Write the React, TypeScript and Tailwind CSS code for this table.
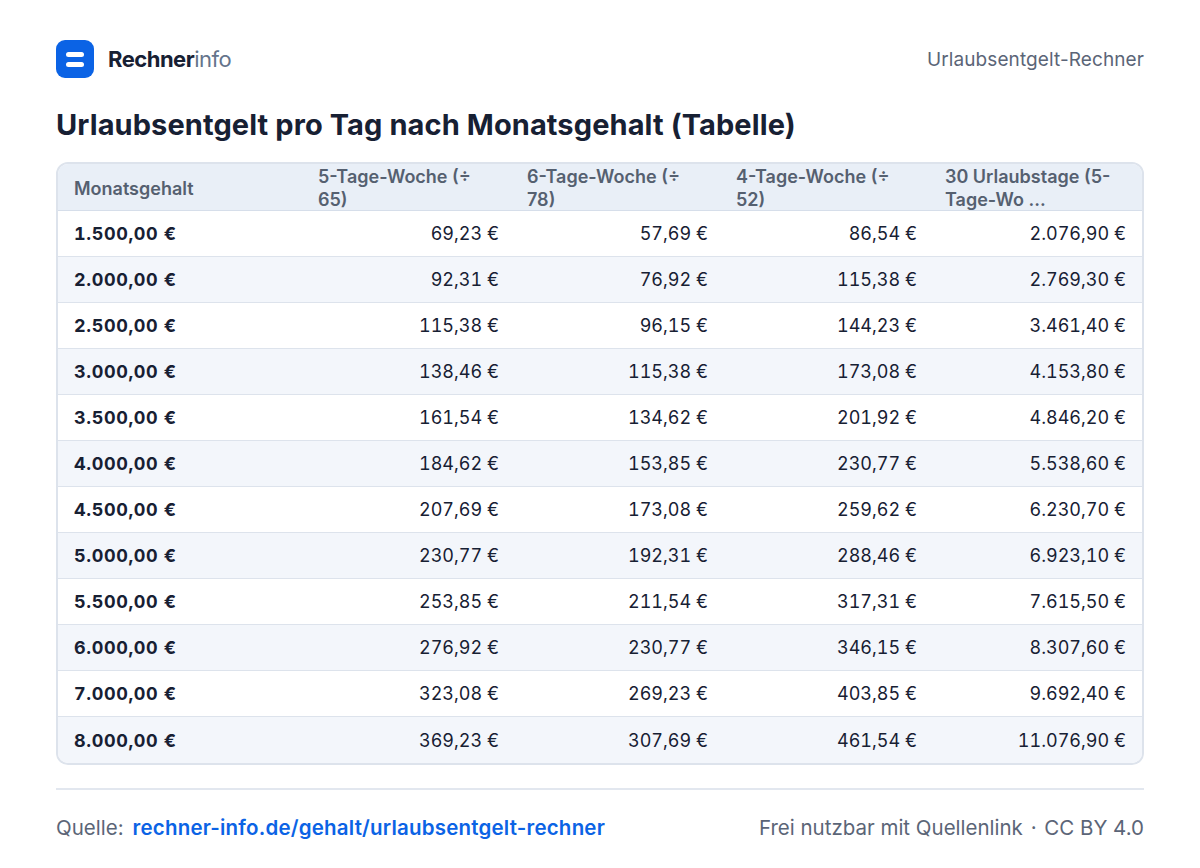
import React from 'react';

const rows: string[][] = [
  ['1.500,00 €', '69,23 €', '57,69 €', '86,54 €', '2.076,90 €'],
  ['2.000,00 €', '92,31 €', '76,92 €', '115,38 €', '2.769,30 €'],
  ['2.500,00 €', '115,38 €', '96,15 €', '144,23 €', '3.461,40 €'],
  ['3.000,00 €', '138,46 €', '115,38 €', '173,08 €', '4.153,80 €'],
  ['3.500,00 €', '161,54 €', '134,62 €', '201,92 €', '4.846,20 €'],
  ['4.000,00 €', '184,62 €', '153,85 €', '230,77 €', '5.538,60 €'],
  ['4.500,00 €', '207,69 €', '173,08 €', '259,62 €', '6.230,70 €'],
  ['5.000,00 €', '230,77 €', '192,31 €', '288,46 €', '6.923,10 €'],
  ['5.500,00 €', '253,85 €', '211,54 €', '317,31 €', '7.615,50 €'],
  ['6.000,00 €', '276,92 €', '230,77 €', '346,15 €', '8.307,60 €'],
  ['7.000,00 €', '323,08 €', '269,23 €', '403,85 €', '9.692,40 €'],
  ['8.000,00 €', '369,23 €', '307,69 €', '461,54 €', '11.076,90 €'],
];

const headers = [
  'Monatsgehalt',
  '5-Tage-Woche (÷ 65)',
  '6-Tage-Woche (÷ 78)',
  '4-Tage-Woche (÷ 52)',
  '30 Urlaubstage (5-Tage-Wo ...',
];

const grid = 'grid grid-cols-[248px_209px_209px_209px_1fr]';

export default function App() {
  return (
    <div className="w-[1200px] h-[868px] bg-white px-14 pt-10 font-['Inter',sans-serif] text-[#172033]">
      {/* top bar */}
      <div className="flex items-center justify-between h-[38px]">
        <div className="flex items-center gap-[14px]">
          <div className="w-[38px] h-[38px] rounded-[9px] bg-[#0b63e5] flex flex-col items-center justify-center gap-[5px]">
            <div className="w-[18px] h-[5px] rounded-full bg-white" />
            <div className="w-[18px] h-[5px] rounded-full bg-white" />
          </div>
          <div className="text-[22px] tracking-[-0.5px]">
            <span className="font-bold text-[#172033]">Rechner</span>
            <span className="font-normal text-[#64748b]">info</span>
          </div>
        </div>
        <div className="text-[19px] tracking-[0.1px] text-[#5b6577] pt-[2px]">Urlaubsentgelt-Rechner</div>
      </div>

      <h1 className="mt-[27px] text-[29px] font-bold tracking-[0.1px] leading-[40px]">
        Urlaubsentgelt pro Tag nach Monatsgehalt (Tabelle)
      </h1>

      {/* table */}
      <div className="mt-[17px] rounded-[12px] border-2 border-[#dde3ec] overflow-hidden">
        <div className={`${grid} h-[47px] bg-[#e9eff7] border-b border-[#d6deea] text-[18px] font-semibold text-[#556070] leading-[23px]`}>
          {headers.map((h, i) => (
            <div
              key={i}
              className={`flex items-center pt-[1px] ${i === 0 ? 'pl-4' : 'pl-3 pr-4'}`}
            >
              <span className="block">{h}</span>
            </div>
          ))}
        </div>
        {rows.map((r, ri) => (
          <div
            key={ri}
            className={`${grid} h-[46px] items-center text-[18px] tabular-nums ${ri % 2 === 1 ? 'bg-[#f3f6fb]' : 'bg-white'} ${ri < rows.length - 1 ? 'border-b border-[#dde3ec]' : ''}`}
          >
            {r.map((c, ci) => (
              <div
                key={ci}
                className={ci === 0 ? 'pl-4 font-bold tracking-[0.6px]' : 'text-right pl-3 pr-4'}
              >
                {c}
              </div>
            ))}
          </div>
        ))}
      </div>

      {/* footer */}
      <div className="mt-[23px] border-t-2 border-[#e2e7ef] pt-[23px] flex items-center justify-between text-[20.5px]">
        <div className="flex items-center gap-[9px]">
          <span className="text-[#5b6577]">Quelle:</span>
          <span className="font-semibold tracking-[0.2px] text-[#0b63e5]">rechner-info.de/gehalt/urlaubsentgelt-rechner</span>
        </div>
        <div className="text-[#5b6577]">
          Frei nutzbar mit Quellenlink <span className="mx-[2px]">·</span> CC BY 4.0
        </div>
      </div>
    </div>
  );
}
